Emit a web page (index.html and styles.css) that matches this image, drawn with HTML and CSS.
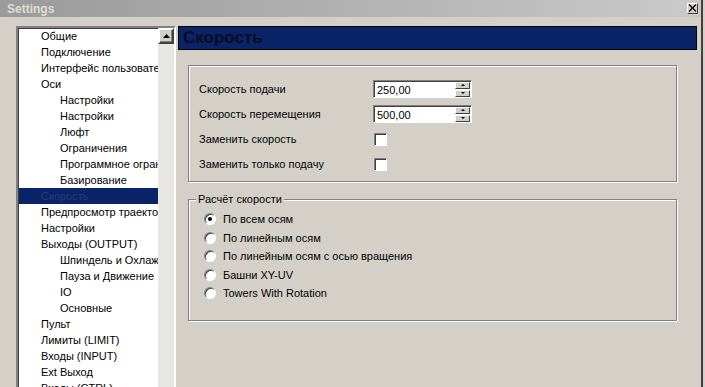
FILE: index.html
```html
<!DOCTYPE html>
<html lang="ru">
<head>
    <meta charset="UTF-8">
    <title>Settings</title>
    <link rel="stylesheet" href="styles.css">
</head>
<body>
    <div class="window">
        <div class="titlebar">
            <span class="title">Settings</span>
            <span class="close-btn">
                <svg width="9" height="8" viewBox="0 0 9 8"><path d="M1 0.5 L8 7.5 M8 0.5 L1 7.5" stroke="#000" stroke-width="1.2"/></svg>
            </span>
        </div>
        <div class="client">
            <div class="tree">
                <ul class="tree-list">
                    <li class="lvl1">Общие</li>
                    <li class="lvl1">Подключение</li>
                    <li class="lvl1">Интерфейс пользователя</li>
                    <li class="lvl1">Оси</li>
                    <li class="lvl2">Настройки</li>
                    <li class="lvl2">Настройки</li>
                    <li class="lvl2">Люфт</li>
                    <li class="lvl2">Ограничения</li>
                    <li class="lvl2">Программное ограничение</li>
                    <li class="lvl2">Базирование</li>
                    <li class="lvl1 selected">Скорость</li>
                    <li class="lvl1">Предпросмотр траектории</li>
                    <li class="lvl1">Настройки</li>
                    <li class="lvl1">Выходы (OUTPUT)</li>
                    <li class="lvl2">Шпиндель и Охлаждение</li>
                    <li class="lvl2">Пауза и Движение</li>
                    <li class="lvl2">IO</li>
                    <li class="lvl2">Основные</li>
                    <li class="lvl1">Пульт</li>
                    <li class="lvl1">Лимиты (LIMIT)</li>
                    <li class="lvl1">Входы (INPUT)</li>
                    <li class="lvl1">Ext Выход</li>
                    <li class="lvl1">Входы (CTRL)</li>
                </ul>
                <div class="scrollbar">
                    <div class="scroll-btn">
                        <svg width="7" height="4" viewBox="0 0 7 4"><path d="M3.5 0 L7 4 L0 4 Z" fill="#000"/></svg>
                    </div>
                    <div class="scroll-track"></div>
                </div>
            </div>

            <div class="page">
                <div class="page-header"><span class="page-title">Скорость</span></div>

                <fieldset class="group group-speed">
                    <div class="form-grid">
                        <label>Скорость подачи</label>
                        <div class="spinbox">
                            <span class="spin-value">250,00</span>
                            <span class="spin-btns">
                                <span class="spin-btn up"></span>
                                <span class="spin-btn down"></span>
                            </span>
                        </div>
                        <label>Скорость перемещения</label>
                        <div class="spinbox">
                            <span class="spin-value">500,00</span>
                            <span class="spin-btns">
                                <span class="spin-btn up"></span>
                                <span class="spin-btn down"></span>
                            </span>
                        </div>
                        <label>Заменить скорость</label>
                        <div><span class="checkbox"></span></div>
                        <label>Заменить только подачу</label>
                        <div><span class="checkbox"></span></div>
                    </div>
                </fieldset>

                <fieldset class="group group-calc">
                    <legend>Расчёт скорости</legend>
                    <div class="radio-row"><span class="radio checked"></span>По всем осям</div>
                    <div class="radio-row"><span class="radio"></span>По линейным осям</div>
                    <div class="radio-row"><span class="radio"></span>По линейным осям с осью вращения</div>
                    <div class="radio-row"><span class="radio"></span>Башни XY-UV</div>
                    <div class="radio-row"><span class="radio"></span>Towers With Rotation</div>
                </fieldset>
            </div>
        </div>
    </div>
</body>
</html>
```

FILE: styles.css
```css
body {
    margin: 0;
    width: 705px;
    height: 387px;
    overflow: hidden;
    background-color: #d4d0c8;
    font-family: "Liberation Sans", Arial, sans-serif;
    font-size: 11px;
    color: #000;
}
.window {
    width: 701px;
    height: 387px;
    display: flex;
    flex-direction: column;
    background-color: #d4d0c8;
    border-right: 2px solid #404040;
}
.titlebar {
    height: 17px;
    flex: none;
    display: flex;
    align-items: center;
    justify-content: space-between;
    padding: 0 3px 0 7px;
    background: linear-gradient(to right, #9a9a9a, #cacaca);
}
.title {
    color: #dedbd5;
    font-weight: bold;
    font-size: 12px;
}
.close-btn {
    width: 9px;
    height: 9px;
    display: flex;
    align-items: center;
    justify-content: center;
    background-color: #d4d0c8;
    border: 1px solid;
    border-color: #fff #404040 #404040 #fff;
    margin-top: -1px;
}
.client {
    flex: 1;
    display: flex;
    gap: 2px;
    padding: 9px 0 0 16px;
    min-height: 0;
}

/* tree */
.tree {
    width: 156px;
    flex: none;
    display: flex;
    background-color: #fff;
    border: 2px solid;
    border-color: #808080 #fff #fff #808080;
    box-shadow: inset 1px 1px 0 #404040;
    height: 400px;
}
.tree-list {
    list-style: none;
    margin: 0;
    padding: 0 0 0 1px;
    flex: 1;
    overflow: hidden;
}
.tree-list li {
    height: 16px;
    line-height: 16px;
    white-space: nowrap;
    overflow: hidden;
}
.lvl1 {
    padding-left: 22px;
}
.lvl2 {
    padding-left: 41px;
}
.tree-list .selected {
    background-color: #0a246a;
    color: #283a7c;
}
.scrollbar {
    width: 16px;
    display: flex;
    flex-direction: column;
}
.scroll-btn {
    height: 12px;
    display: flex;
    align-items: center;
    justify-content: center;
    background-color: #d4d0c8;
    border: 2px solid;
    border-color: #fff #404040 #404040 #fff;
    box-shadow: inset -1px -1px 0 #808080;
}
.scroll-track {
    flex: 1;
    background-color: #e9e7e3;
}

/* page */
.page {
    width: 519px;
    flex: none;
}
.page-header {
    height: 22px;
    line-height: 22px;
    background-color: #0a246a;
    border: 1px solid #000;
    padding-left: 4px;
}
.page-title {
    font-size: 17px;
    font-weight: bold;
    color: #0b0b1e;
}
.group {
    margin: 15px 0 0 10px;
    width: 489px;
    box-sizing: border-box;
    border: 1px solid #808080;
    box-shadow: inset 1px 1px 0 #fff, 1px 1px 0 #fff;
    min-inline-size: auto;
}
.group-speed {
    height: 117px;
    padding: 14px 10px 0 10px;
}
.form-grid {
    display: grid;
    grid-template-columns: 174px 1fr;
    grid-auto-rows: 18px;
    row-gap: 7px;
    align-items: center;
}
.spinbox {
    width: 99px;
    height: 18px;
    box-sizing: border-box;
    display: flex;
    align-items: center;
    background-color: #fff;
    border: 1px solid;
    border-color: #808080 #fff #fff #808080;
    box-shadow: inset 1px 1px 0 #404040;
}
.spin-value {
    flex: 1;
    padding-left: 3px;
    padding-top: 1px;
}
.spin-btns {
    width: 15px;
    display: flex;
    flex-direction: column;
    gap: 1px;
    margin-right: 1px;
    margin-top: 1px;
}
.spin-btn {
    height: 5px;
    background-color: #d4d0c8;
    border: 1px solid;
    border-color: #fff #404040 #404040 #fff;
    position: relative;
}
.spin-btn::after {
    content: "";
    position: absolute;
    left: 5px;
    top: 1px;
    border-left: 2px solid transparent;
    border-right: 2px solid transparent;
}
.spin-btn.up::after {
    border-bottom: 2px solid #000;
}
.spin-btn.down::after {
    border-top: 2px solid #000;
}
.checkbox {
    display: block;
    width: 11px;
    height: 11px;
    margin-left: 1px;
    background-color: #fff;
    border: 1px solid;
    border-color: #808080 #fff #fff #808080;
    box-shadow: inset 1px 1px 0 #404040;
}
.group-calc {
    height: 129px;
    margin-top: 10px;
    padding: 4px 10px 0 15px;
}
.group-calc legend {
    padding: 0 2px;
    margin-left: -8px;
    background-color: #d4d0c8;
    line-height: 14px;
}
.radio-row {
    height: 18.5px;
    display: flex;
    align-items: center;
    gap: 7px;
}
.radio {
    width: 10px;
    height: 10px;
    border-radius: 50%;
    background-color: #fff;
    border: 1px solid;
    border-color: #808080 #fff #fff #808080;
    box-shadow: inset 1px 1px 0 #404040;
    position: relative;
}
.radio.checked::after {
    content: "";
    position: absolute;
    left: 3px;
    top: 3px;
    width: 4px;
    height: 4px;
    border-radius: 50%;
    background-color: #000;
}
```
